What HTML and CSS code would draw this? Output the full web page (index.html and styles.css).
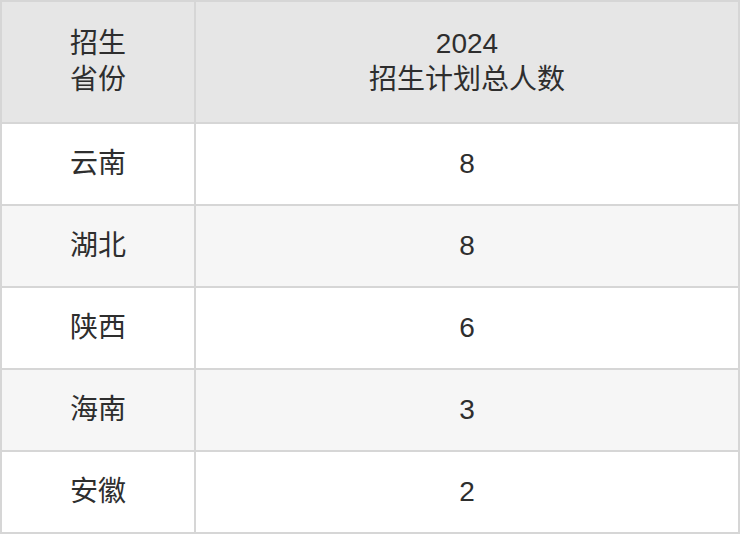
FILE: index.html
```html
<!DOCTYPE html>
<html lang="zh">
<head>
<meta charset="utf-8">
<link rel="stylesheet" href="styles.css">
</head>
<body>
<div class="table">
  <div class="cell head">招生<br>省份</div>
  <div class="cell head">2024<br>招生计划总人数</div>
  <div class="cell">云南</div>
  <div class="cell">8</div>
  <div class="cell alt">湖北</div>
  <div class="cell alt">8</div>
  <div class="cell">陕西</div>
  <div class="cell">6</div>
  <div class="cell alt">海南</div>
  <div class="cell alt">3</div>
  <div class="cell">安徽</div>
  <div class="cell">2</div>
</div>
</body>
</html>
```
FILE: styles.css
```css
html, body {
  margin: 0;
  padding: 0;
  background: #ffffff;
}
.table {
  width: 740px;
  box-sizing: border-box;
  display: grid;
  grid-template-columns: 192px 1fr;
  grid-template-rows: 120px repeat(5, 80px);
  gap: 2px;
  padding: 2px;
  background: #d6d6d6;
  font-family: "Liberation Sans", "Noto Sans CJK SC", sans-serif;
  font-size: 28px;
  line-height: 36px;
  color: #2e2e2e;
}
.cell {
  display: flex;
  align-items: center;
  justify-content: center;
  text-align: center;
  background: #ffffff;
}
.cell.head {
  background: #e6e6e6;
}
.cell.alt {
  background: #f6f6f6;
}
```
